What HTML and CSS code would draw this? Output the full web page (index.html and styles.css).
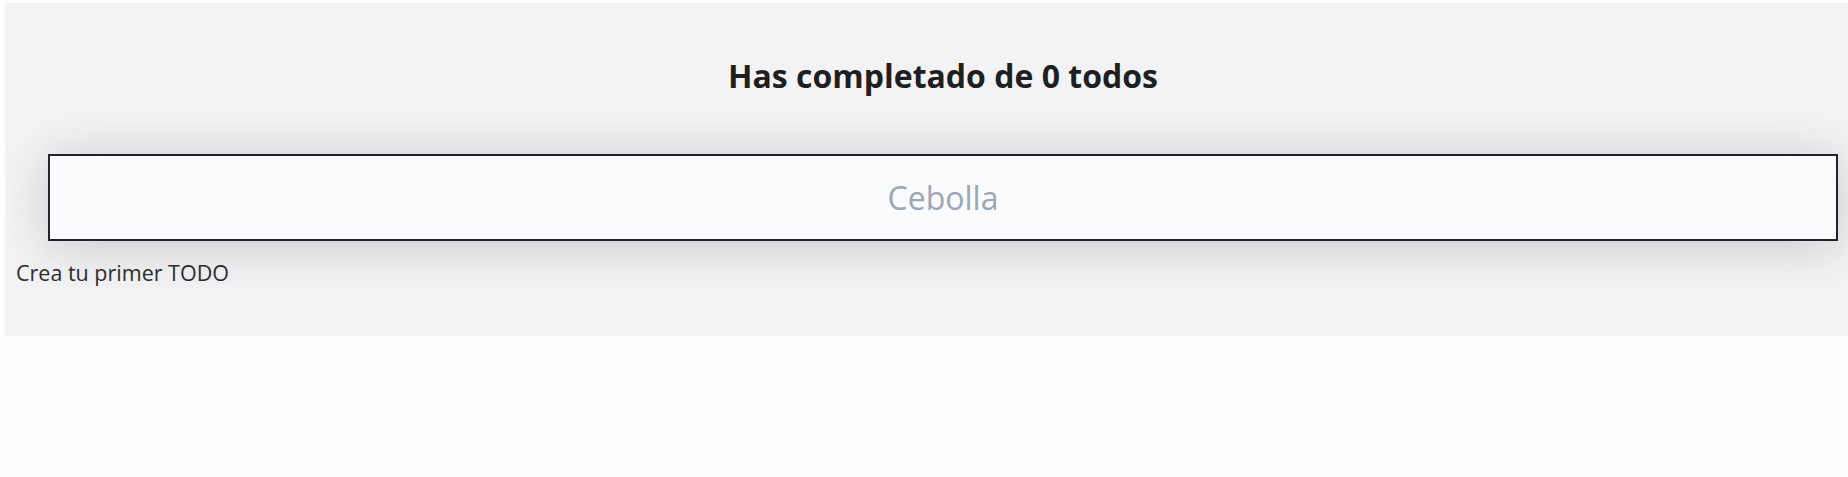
FILE: index.html
```html
<!DOCTYPE html>
<html lang="es">
<head>
<meta charset="utf-8">
<title>Todos</title>
<link rel="stylesheet" href="styles.css">
</head>
<body>
<div class="page">
  <main class="panel">
    <h1 class="counter">Has completado de 0 todos</h1>
    <div class="search-wrap">
      <input class="search" type="text" placeholder="Cebolla">
    </div>
    <p class="empty">Crea tu primer TODO</p>
  </main>
</div>
</body>
</html>
```

FILE: styles.css
```css
html, body {
  margin: 0;
  padding: 0;
  overflow: hidden;
  background: #fdfefe;
}

.page {
  padding: 3px 0 0 5px;
}

.panel {
  box-sizing: border-box;
  width: 1876px;
  background: #f3f3f5;
  padding: 53px 11px 49px;
  font-family: "Open Sans", "Liberation Sans", sans-serif;
}

.counter {
  margin: 0 0 58px;
  text-align: center;
  font-size: 32px;
  line-height: 40px;
  font-weight: 700;
  color: #1e1f22;
}

.search-wrap {
  padding: 0 32px;
}

.search {
  display: block;
  box-sizing: border-box;
  width: 100%;
  height: 87px;
  border: 2px solid #202329;
  background: #fafbfc;
  box-shadow: 0 5px 50px rgba(40, 44, 52, 0.22);
  font-family: inherit;
  font-size: 32px;
  font-weight: 400;
  text-align: center;
  color: #1e1f22;
  outline: none;
}

.search::placeholder {
  color: #9ba6b8;
}

.empty {
  margin: 18px 0 0;
  font-size: 21.5px;
  line-height: 28px;
  font-weight: 400;
  color: #2b2b2e;
}
```
